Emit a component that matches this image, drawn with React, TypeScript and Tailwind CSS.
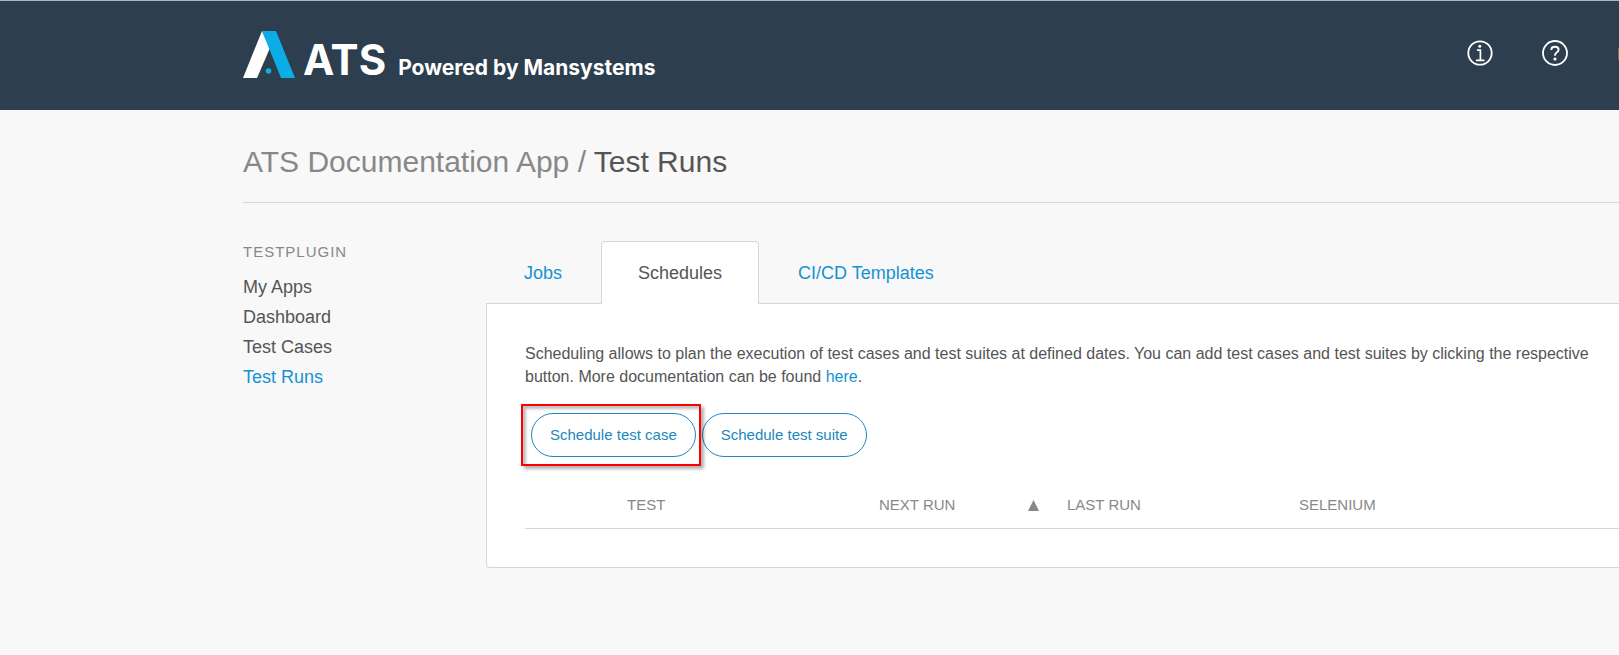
const navItems = ["My Apps", "Dashboard", "Test Cases", "Test Runs"];

function Logo() {
  return (
    <svg className="h-12 w-[52px]" viewBox="0 0 52 48" aria-hidden="true">
      <path d="M19 1 L27 18 L14 48 H0 Z" fill="#ffffff" />
      <path d="M19 1 H33 L52 48 H38 Z" fill="#0badE6" />
      <circle cx="25.5" cy="41" r="2.8" fill="#0badE6" />
    </svg>
  );
}

function InfoIcon() {
  return (
    <svg className="size-[26px]" viewBox="0 0 26 26" fill="none" stroke="#ffffff" aria-hidden="true">
      <circle cx="13" cy="13" r="11.7" strokeWidth="1.8" />
      <path d="M10 10.2 H13.4 V20 M9 20.4 H17.5" strokeWidth="1.7" />
      <circle cx="12.8" cy="6.2" r="1.5" fill="#ffffff" stroke="none" />
    </svg>
  );
}

function HelpIcon() {
  return (
    <svg className="size-[26px]" viewBox="0 0 26 26" fill="none" stroke="#ffffff" aria-hidden="true">
      <circle cx="13" cy="13" r="12" strokeWidth="1.8" />
      <path
        d="M9.4 10 V9.2 Q9.6 6.8 13 6.8 Q16.6 6.8 16.6 9.8 Q16.6 11.4 14.6 12.5 Q13 13.5 13 15.8"
        strokeWidth="1.9"
      />
      <circle cx="13" cy="19" r="1.6" fill="#ffffff" stroke="none" />
    </svg>
  );
}

export default function App() {
  return (
    <div className="min-h-screen overflow-x-hidden bg-[#f8f8f8] font-['Liberation_Sans',Arial,sans-serif] text-[#555555]">
      <header className="flex h-[110px] items-start justify-between border-t border-[#a9b4be] bg-[#2d3e4e] pl-[243px] text-white">
        <a href="#home" className="flex items-start pt-[29px] font-['Inter',sans-serif]">
          <Logo />
          <span className="flex items-baseline pt-1.5 font-bold">
            <span className="ml-2 text-[42px] leading-[48px]">ATS</span>
            <span className="ml-3 text-[21px] leading-7">Powered by Mansystems</span>
          </span>
        </a>
        <div className="flex pt-[39px]">
          <button type="button" aria-label="Information" className="mr-[49px]">
            <InfoIcon />
          </button>
          <button type="button" aria-label="Help" className="mr-[50px]">
            <HelpIcon />
          </button>
          <span className="mt-2 h-3 w-px bg-[#7d7032]" />
        </div>
      </header>

      <div className="pl-[243px]">
        <h1 className="border-b border-[#d7d7d7] pt-[34px] pb-[22px] text-[30px] leading-9 text-[#555555]">
          <span className="text-[#888888]">ATS Documentation App / </span>Test Runs
        </h1>

        <div className="flex">
          <nav aria-label="Testplugin" className="w-[243px] shrink-0 pt-[39px]">
            <h2 className="text-[15px] leading-5 tracking-[1px] text-[#888888]">TESTPLUGIN</h2>
            <ul className="mt-[10px] text-lg leading-[30px]">
              {navItems.map((item) => (
                <li key={item}>
                  <a href="#nav" className={item === "Test Runs" ? "text-[#1592d2]" : "text-[#555555]"}>
                    {item}
                  </a>
                </li>
              ))}
            </ul>
          </nav>

          <main className="min-w-0 grow pt-[38px]">
            <div role="tablist" className="flex gap-px text-lg leading-6">
              <button type="button" role="tab" className="px-[38px] pt-0.5 text-[#1592d2]">
                Jobs
              </button>
              <button
                type="button"
                role="tab"
                aria-selected="true"
                className="z-10 -mb-px rounded-t border border-b-0 border-[#d7d7d7] bg-white px-9 py-[19px]"
              >
                Schedules
              </button>
              <button type="button" role="tab" className="px-[38px] pt-0.5 text-[#1592d2]">
                CI/CD Templates
              </button>
            </div>

            <section className="rounded-bl border border-r-0 border-[#d7d7d7] bg-white pt-[38px] pb-[38px] pl-[38px]">
              <p className="text-base leading-[23px]">
                Scheduling allows to plan the execution of test cases and test suites at defined dates. You can add test
                cases and test suites by clicking the respective button. More documentation can be found{" "}
                <a href="#docs" className="text-[#1592d2]">
                  here
                </a>
                .
              </p>

              <div className="mt-[25px] flex gap-[6px] pl-[6px] text-[15px] leading-5 text-[#2088bd]">
                <div className="relative">
                  <button type="button" className="h-11 rounded-full border border-[#2088bd] px-[18px]">
                    Schedule test case
                  </button>
                  <span className="pointer-events-none absolute -top-[9px] -right-[5px] -bottom-[9px] -left-[10px] border-2 border-[#ff0000] shadow-[3px_3px_3px_rgba(0,0,0,0.3),inset_3px_3px_3px_rgba(0,0,0,0.25)]" />
                </div>
                <button type="button" className="h-11 rounded-full border border-[#2088bd] px-[18px]">
                  Schedule test suite
                </button>
              </div>

              <div className="mt-[38px] border-b border-[#d7d7d7]">
                <table className="w-full table-fixed text-left text-[15px] leading-5 text-[#888888]">
                  <thead>
                    <tr>
                      <td className="w-[94px]" />
                      <th className="w-[252px] px-2 pb-[13px] font-normal">TEST</th>
                      <th className="w-[188px] px-2 pb-[13px] font-normal">
                        <span className="flex items-center justify-between">
                          NEXT RUN
                          <svg className="mr-3 h-[11px] w-[11px]" viewBox="0 0 11 11" fill="#888888" aria-hidden="true">
                            <path d="M5.5 0 L11 11 H0 Z" />
                          </svg>
                        </span>
                      </th>
                      <th className="w-[232px] px-2 pb-[13px] font-normal">LAST RUN</th>
                      <th className="px-2 pb-[13px] font-normal">SELENIUM</th>
                    </tr>
                  </thead>
                </table>
              </div>
            </section>
          </main>
        </div>
      </div>
    </div>
  );
}
